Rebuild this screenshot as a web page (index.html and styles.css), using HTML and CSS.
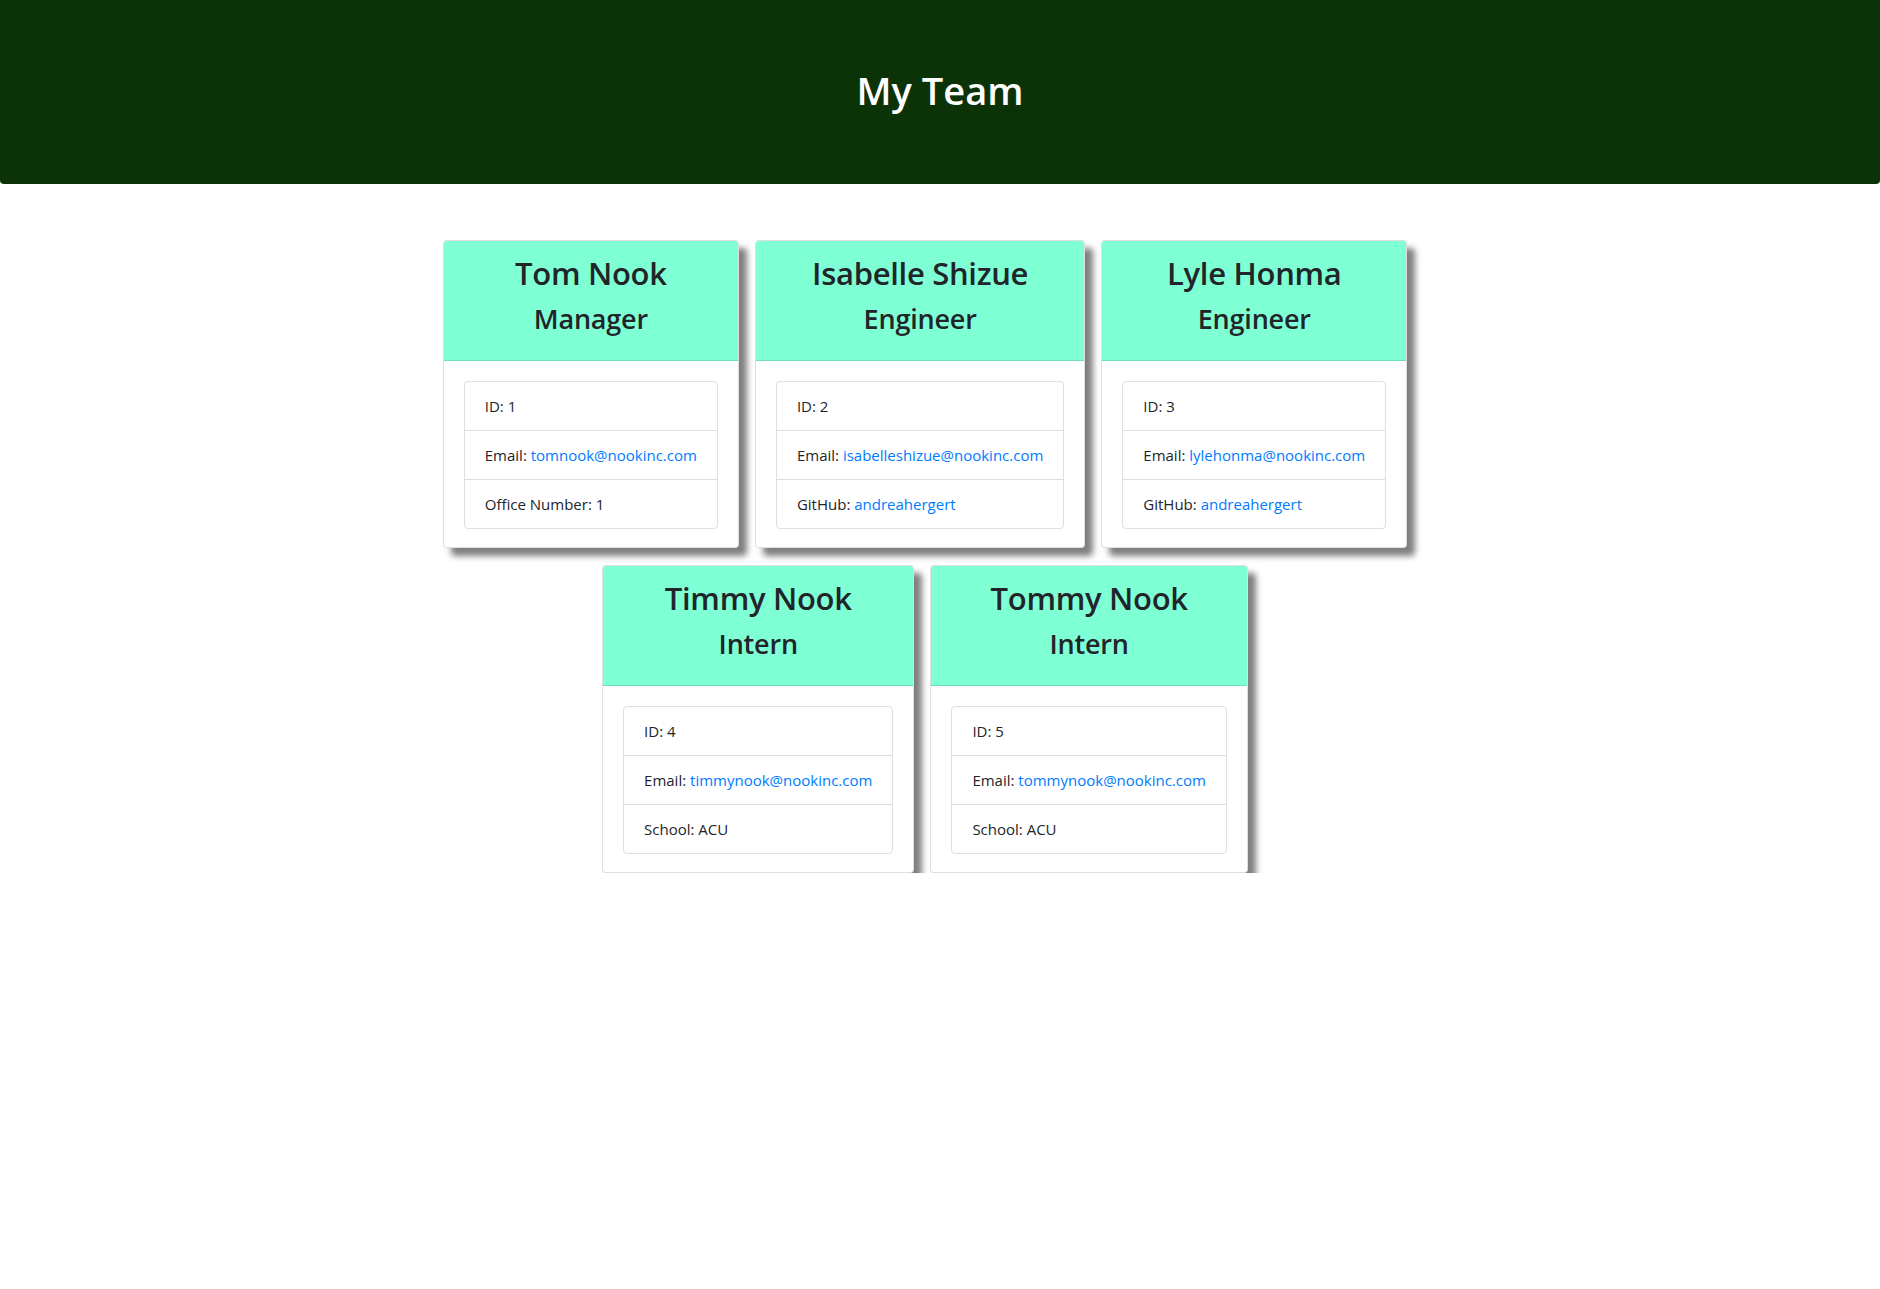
FILE: index.html
```html
<!DOCTYPE html>
<html lang="en">
<head>
<meta charset="UTF-8">
<title>My Team</title>
<link rel="stylesheet" href="styles.css">
</head>
<body>
<header class="jumbotron">
  <h1 class="page-title">My Team</h1>
</header>
<main class="team">
  <div class="card">
    <div class="card-header">
      <h2 class="card-name">Tom Nook</h2>
      <h3 class="card-role">Manager</h3>
    </div>
    <div class="card-body">
      <ul class="list-group">
        <li class="list-item">ID: 1</li>
        <li class="list-item">Email: <a href="#">tomnook@nookinc.com</a></li>
        <li class="list-item">Office Number: 1</li>
      </ul>
    </div>
  </div>
  <div class="card">
    <div class="card-header">
      <h2 class="card-name">Isabelle Shizue</h2>
      <h3 class="card-role">Engineer</h3>
    </div>
    <div class="card-body">
      <ul class="list-group">
        <li class="list-item">ID: 2</li>
        <li class="list-item">Email: <a href="#">isabelleshizue@nookinc.com</a></li>
        <li class="list-item">GitHub: <a href="#">andreahergert</a></li>
      </ul>
    </div>
  </div>
  <div class="card">
    <div class="card-header">
      <h2 class="card-name">Lyle Honma</h2>
      <h3 class="card-role">Engineer</h3>
    </div>
    <div class="card-body">
      <ul class="list-group">
        <li class="list-item">ID: 3</li>
        <li class="list-item">Email: <a href="#">lylehonma@nookinc.com</a></li>
        <li class="list-item">GitHub: <a href="#">andreahergert</a></li>
      </ul>
    </div>
  </div>
  <div class="card">
    <div class="card-header">
      <h2 class="card-name">Timmy Nook</h2>
      <h3 class="card-role">Intern</h3>
    </div>
    <div class="card-body">
      <ul class="list-group">
        <li class="list-item">ID: 4</li>
        <li class="list-item">Email: <a href="#">timmynook@nookinc.com</a></li>
        <li class="list-item">School: ACU</li>
      </ul>
    </div>
  </div>
  <div class="card">
    <div class="card-header">
      <h2 class="card-name">Tommy Nook</h2>
      <h3 class="card-role">Intern</h3>
    </div>
    <div class="card-body">
      <ul class="list-group">
        <li class="list-item">ID: 5</li>
        <li class="list-item">Email: <a href="#">tommynook@nookinc.com</a></li>
        <li class="list-item">School: ACU</li>
      </ul>
    </div>
  </div>
</main>
</body>
</html>
```

FILE: styles.css
```css
* {
  box-sizing: border-box;
}

body {
  margin: 0;
  background: #ffffff;
  color: #212529;
  font-family: "Open Sans", "Noto Sans", sans-serif;
  font-size: 15px;
  line-height: 1.5;
}

.jumbotron {
  background: #0b3307;
  color: #ffffff;
  text-align: center;
  padding: 66px 32px 62px;
  border-radius: 0 0 4px 4px;
  margin-bottom: 56px;
}

.page-title {
  margin: 0 0 8px;
  font-size: 38px;
  font-weight: 600;
  line-height: 48px;
}

.team {
  max-width: 1140px;
  margin: 0 auto;
  padding: 0 45px 0 15px;
  display: flex;
  flex-wrap: wrap;
  justify-content: center;
  gap: 17px 16px;
}

.card {
  background: #ffffff;
  border: 1px solid rgba(0, 0, 0, 0.125);
  border-radius: 4px;
  box-shadow: 8px 8px 6px #7f7f7f;
  overflow: hidden;
}

.card-header {
  background: #7fffd4;
  border-bottom: 1px solid rgba(0, 0, 0, 0.125);
  text-align: center;
  padding: 13px 20px 24px;
}

.card-name {
  margin: 0 0 10px;
  font-size: 31px;
  font-weight: 600;
  letter-spacing: -0.3px;
  line-height: 38px;
}

.card-role {
  margin: 0;
  font-size: 27px;
  font-weight: 600;
  letter-spacing: -0.2px;
  line-height: 34px;
}

.card-body {
  padding: 20px 20px 18px;
}

.list-group {
  list-style: none;
  margin: 0;
  padding: 0;
  border: 1px solid rgba(0, 0, 0, 0.125);
  border-radius: 4px;
}

.list-item {
  padding: 12px 20px;
  line-height: 24px;
  white-space: nowrap;
}

.list-item + .list-item {
  border-top: 1px solid rgba(0, 0, 0, 0.125);
}

.list-item a {
  color: #007bff;
  text-decoration: none;
}
```
